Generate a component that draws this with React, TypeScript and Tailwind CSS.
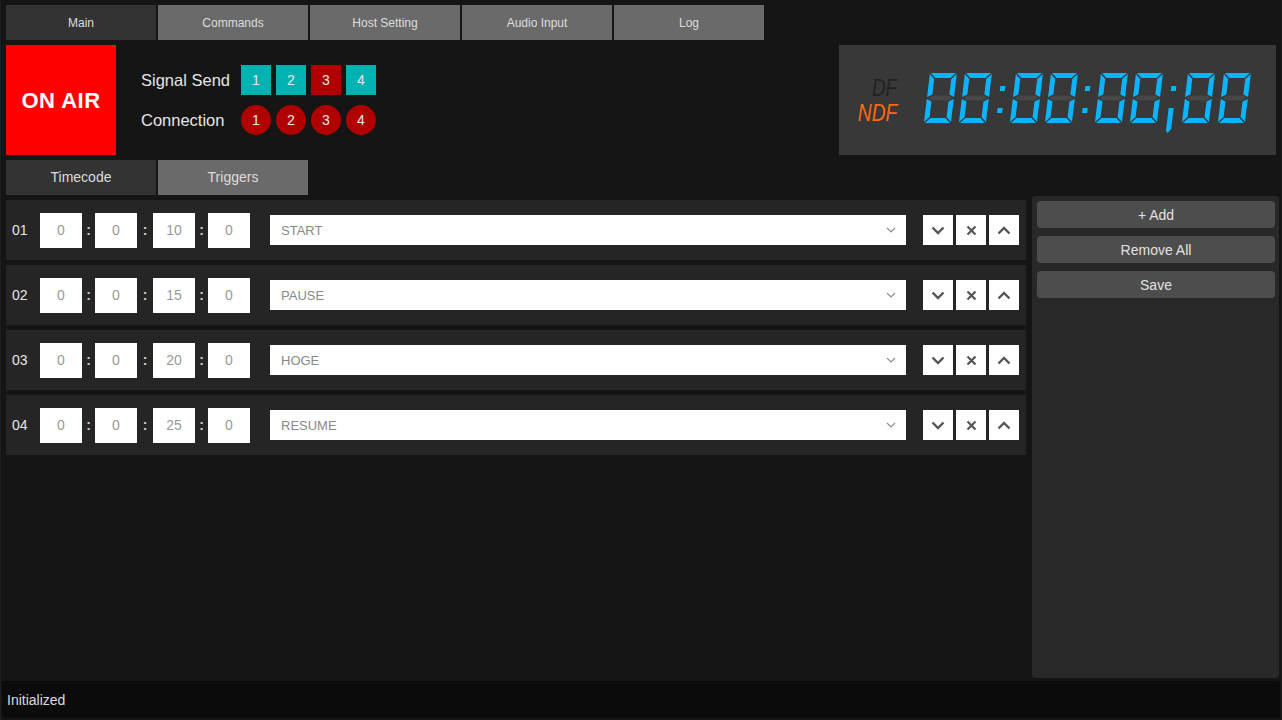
import React from "react";

const ON = "#0ab4ff";
const OFF = "#474747";
const W = 27;
const H = 50;
const T = 5;
const G = 1;

function seg(x: number) {
  const m = H / 2;
  return {
    a: [[x + G, 0], [x + W - G, 0], [x + W - G - T, T], [x + G + T, T]],
    b: [[x + W, G], [x + W, m - G], [x + W - T, m - T / 2 - G], [x + W - T, G + T]],
    c: [[x + W, m + G], [x + W, H - G], [x + W - T, H - T - G], [x + W - T, m + T / 2 + G]],
    d: [[x + G + T, H - T], [x + W - G - T, H - T], [x + W - G, H], [x + G, H]],
    e: [[x, m + G], [x + T, m + T / 2 + G], [x + T, H - T - G], [x, H - G]],
    f: [[x, G], [x + T, G + T], [x + T, m - T / 2 - G], [x, m - G]],
    g: [[x + G, m], [x + G + T, m - T / 2], [x + W - G - T, m - T / 2], [x + W - G, m], [x + W - G - T, m + T / 2], [x + G + T, m + T / 2]],
  } as Record<string, number[][]>;
}

const pts = (p: number[][]) => p.map((q) => q.join(",")).join(" ");

function Digit({ x }: { x: number }) {
  const s = seg(x);
  return (
    <g>
      {["a", "b", "c", "d", "e", "f", "g"].map((k) => (
        <polygon key={k} points={pts(s[k])} fill={k === "g" ? OFF : ON} />
      ))}
    </g>
  );
}

function SevenSeg() {
  const xs = [2, 37, 88, 123, 173, 208, 260, 296];
  return (
    <svg width="340" height="62" viewBox="0 0 340 62" className="block">
      <g transform="translate(6,0) skewX(-7)">
        {xs.map((x, i) => (
          <Digit key={i} x={x} />
        ))}
        <rect x="74" y="13" width="5" height="5" fill={ON} />
        <rect x="74" y="35" width="5" height="5" fill={ON} />
        <rect x="159" y="13" width="5" height="5" fill={ON} />
        <rect x="159" y="35" width="5" height="5" fill={ON} />
        <rect x="245" y="13" width="5" height="5" fill={ON} />
        <polygon points="245,35 250,35 250,56 247,60 245,58" fill={ON} />
      </g>
    </svg>
  );
}

function ChevronDown() {
  return (
    <svg width="14" height="9" viewBox="0 0 14 9">
      <polyline points="1.5,1.5 7,7 12.5,1.5" fill="none" stroke="#555" strokeWidth="2.4" />
    </svg>
  );
}
function ChevronUp() {
  return (
    <svg width="14" height="9" viewBox="0 0 14 9">
      <polyline points="1.5,7.5 7,2 12.5,7.5" fill="none" stroke="#555" strokeWidth="2.4" />
    </svg>
  );
}
function XIcon() {
  return (
    <svg width="11" height="11" viewBox="0 0 11 11">
      <path d="M1.5 1.5 L9.5 9.5 M9.5 1.5 L1.5 9.5" fill="none" stroke="#555" strokeWidth="2.2" />
    </svg>
  );
}

const rows = [
  { n: "01", v: ["0", "0", "10", "0"], cmd: "START" },
  { n: "02", v: ["0", "0", "15", "0"], cmd: "PAUSE" },
  { n: "03", v: ["0", "0", "20", "0"], cmd: "HOGE" },
  { n: "04", v: ["0", "0", "25", "0"], cmd: "RESUME" },
];

function Colon({ w }: { w: string }) {
  return <div className={`${w} text-center text-[14px] font-bold text-[#cfcfcf]`}>:</div>;
}

function Field({ v }: { v: string }) {
  return (
    <div className="w-[42px] h-[35px] bg-white flex items-center justify-center text-[14px] text-[#999]">{v}</div>
  );
}

export default function App() {
  const tabs = ["Main", "Commands", "Host Setting", "Audio Input", "Log"];
  const sig = [true, true, false, true];
  return (
    <div className="w-[1282px] h-[720px] bg-[#151515] border-x border-[#1e1e1e] flex flex-col font-['Liberation_Sans',Arial,sans-serif] text-[#dddddd] overflow-hidden">
      {/* top tabs */}
      <div className="flex gap-[2px] pl-[5px] pt-[5px]">
        {tabs.map((t, i) => (
          <div
            key={t}
            className={`w-[150px] h-[35px] flex items-center justify-center text-[12px] ${i === 0 ? "bg-[#333333]" : "bg-[#6a6a6a]"}`}
          >
            {t}
          </div>
        ))}
      </div>

      {/* header */}
      <div className="flex h-[110px] mt-[5px] pl-[5px] pr-[5px]">
        <div className="w-[110px] h-[110px] bg-[#ff0000] flex items-center justify-center text-white text-[22px] font-bold tracking-[0.5px]">
          ON AIR
        </div>
        <div className="ml-[25px] pt-[20px] flex flex-col gap-[10px]">
          <div className="flex items-center h-[30px]">
            <div className="w-[100px] text-[16.5px] text-[#e6e6e6]">Signal Send</div>
            <div className="flex gap-[5px]">
              {sig.map((s, i) => (
                <div
                  key={i}
                  className={`w-[30px] h-[30px] flex items-center justify-center text-[14px] text-[#e8e8e8] ${s ? "bg-[#00b2b2]" : "bg-[#b00000]"}`}
                >
                  {i + 1}
                </div>
              ))}
            </div>
          </div>
          <div className="flex items-center h-[30px]">
            <div className="w-[100px] text-[16.5px] text-[#e6e6e6]">Connection</div>
            <div className="flex gap-[5px]">
              {[1, 2, 3, 4].map((n) => (
                <div
                  key={n}
                  className="w-[30px] h-[30px] rounded-full bg-[#b00000] flex items-center justify-center text-[14px] text-[#e8e8e8]"
                >
                  {n}
                </div>
              ))}
            </div>
          </div>
        </div>
        <div className="flex-1" />
        <div className="w-[437px] h-[110px] bg-[#383838] flex items-start">
          <div className="w-[58px] mt-[30px] flex flex-col items-end italic text-[24px] leading-[25px]">
            <div className="origin-right scale-x-[0.78] text-[#222222]">DF</div>
            <div className="origin-right scale-x-[0.8] text-[#ff6a13]">NDF</div>
          </div>
          <div className="ml-[25px] mt-[28px]">
            <SevenSeg />
          </div>
        </div>
      </div>

      {/* sub tabs */}
      <div className="flex gap-[2px] pl-[5px] mt-[5px]">
        <div className="w-[150px] h-[35px] bg-[#333333] flex items-center justify-center text-[14px]">Timecode</div>
        <div className="w-[150px] h-[35px] bg-[#6a6a6a] flex items-center justify-center text-[14px]">Triggers</div>
      </div>

      {/* content */}
      <div className="flex mt-[1px] h-[482px] pl-[5px] pr-[2px] gap-[6px]">
        <div className="w-[1020px] pt-[4px] flex flex-col gap-[5px]">
          {rows.map((r) => (
            <div key={r.n} className="h-[60px] bg-[#252525] flex items-center">
              <div className="w-[34px] pl-[6px] text-[14px] text-[#e6e6e6]">{r.n}</div>
              <Field v={r.v[0]} />
              <Colon w="w-[13px]" />
              <Field v={r.v[1]} />
              <Colon w="w-[16px]" />
              <Field v={r.v[2]} />
              <Colon w="w-[13px]" />
              <Field v={r.v[3]} />
              <div className="ml-[20px] w-[636px] h-[30px] bg-white flex items-center justify-between pl-[11px] pr-[10px]">
                <span className="text-[13px] text-[#888] pt-[1px]">{r.cmd}</span>
                <svg width="10" height="6" viewBox="0 0 10 6">
                  <polyline points="1,1 5,5 9,1" fill="none" stroke="#8a8a8a" strokeWidth="1.1" />
                </svg>
              </div>
              <div className="ml-[17px] flex gap-[3px]">
                <div className="w-[30px] h-[30px] bg-white flex items-center justify-center">
                  <ChevronDown />
                </div>
                <div className="w-[30px] h-[30px] bg-white flex items-center justify-center">
                  <XIcon />
                </div>
                <div className="w-[30px] h-[30px] bg-white flex items-center justify-center">
                  <ChevronUp />
                </div>
              </div>
            </div>
          ))}
        </div>
        <div className="w-[247px] h-[482px] bg-[#282828] rounded-[4px] pt-[5px] pl-[5px] pr-[4px] flex flex-col gap-[8px]">
          {["+ Add", "Remove All", "Save"].map((b) => (
            <div
              key={b}
              className="h-[27px] pt-[1px] bg-[#4d4d4d] rounded-[4px] flex items-center justify-center text-[14px] text-[#e2e2e2]"
            >
              {b}
            </div>
          ))}
        </div>
      </div>

      {/* status */}
      <div className="mt-[3px] mx-[1px] h-[37px] pt-[2px] bg-[#0b0b0b] rounded-[3px] flex items-center pl-[5px] text-[14px] text-[#dddddd]">
        Initialized
      </div>
    </div>
  );
}
